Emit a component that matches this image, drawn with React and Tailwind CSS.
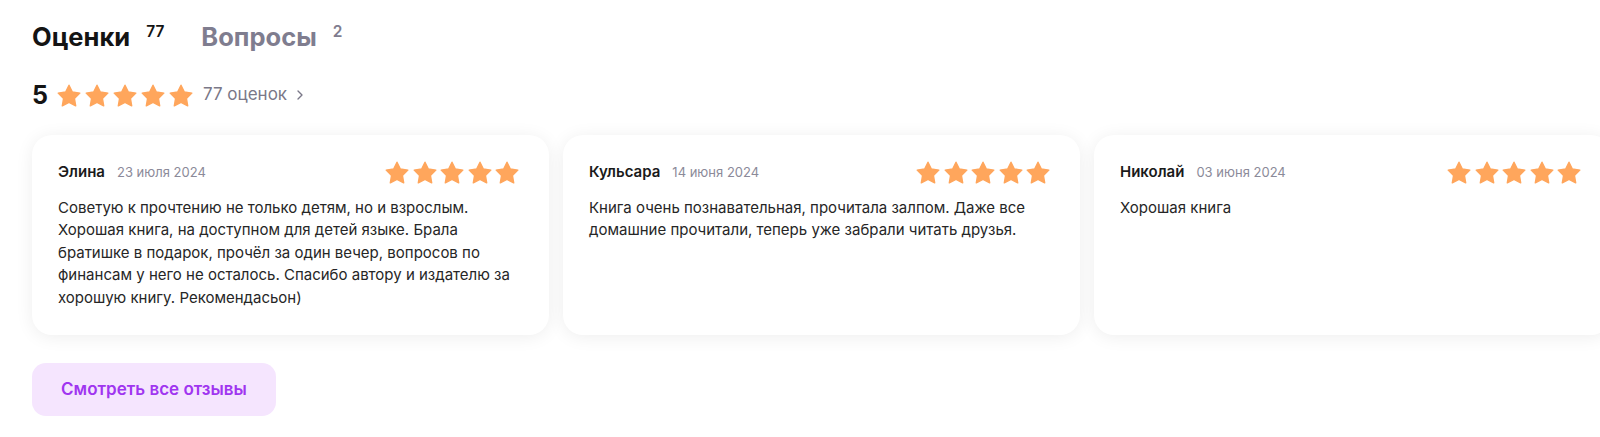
import { ChevronRight } from 'lucide-react';

const REVIEWS = [
  {
    name: 'Элина',
    date: '23 июля 2024',
    text: 'Советую к прочтению не только детям, но и взрослым. Хорошая книга, на доступном для детей языке. Брала братишке в подарок, прочёл за один вечер, вопросов по финансам у него не осталось. Спасибо автору и издателю за хорошую книгу. Рекомендасьон)',
  },
  {
    name: 'Кульсара',
    date: '14 июня 2024',
    text: 'Книга очень познавательная, прочитала залпом. Даже все домашние прочитали, теперь уже забрали читать друзья.',
  },
  {
    name: 'Николай',
    date: '03 июня 2024',
    text: 'Хорошая книга',
  },
];

function Star({ className }) {
  return (
    <svg viewBox="1.5 1.5 21 20" className={className} fill="#ffa65c" stroke="#ffa65c" strokeWidth="1.2" strokeLinejoin="round">
      <path d="M12 2.5l2.94 5.96 6.56.95-4.75 4.63 1.12 6.54L12 17.5l-5.87 3.08 1.12-6.54L2.5 9.41l6.56-.95L12 2.5z" />
    </svg>
  );
}

function Stars({ size, gap }) {
  return (
    <div className={`flex items-center ${gap}`}>
      {[0, 1, 2, 3, 4].map(i => <Star key={i} className={size} />)}
    </div>
  );
}

function ReviewCard({ r }) {
  return (
    <div className="flex-none w-[517px] h-[200px] bg-white rounded-[20px] shadow-[0_2px_18px_rgba(0,0,0,0.07)] pl-[26px] pr-[30px] pt-[26px]">
      <div className="flex items-center justify-between h-[23px]">
        <div className="flex items-baseline gap-[12px]">
          <span className="text-[15px] font-semibold text-[#1a1a1a]">{r.name}</span>
          <span className="text-[13px] text-[#8b8a99]">{r.date}</span>
        </div>
        <Stars size="w-[24px] h-[23px]" gap="gap-[3.5px]" />
      </div>
      <p className="mt-[13px] max-w-[452px] text-[15px] leading-[22.4px] text-[#262626]">{r.text}</p>
    </div>
  );
}

export default function App() {
  return (
    <div className="w-full overflow-hidden bg-white pl-[32px] pt-[21px] pb-[22px] font-['Inter','Noto_Sans',sans-serif]">
      {/* ── Onglets ─────────────────────────────────── */}
      <div className="flex items-start h-[32px]">
        <span className="text-[25.5px] leading-[32px] font-bold text-[#141414]">Оценки</span>
        <span className="ml-[16px] mt-[3px] text-[15.5px] leading-[16px] font-semibold text-[#141414]">77</span>
        <span className="ml-[37px] text-[25.5px] leading-[32px] font-bold text-[#7f7d8f]">Вопросы</span>
        <span className="ml-[16px] mt-[3px] text-[15.5px] leading-[16px] font-semibold text-[#7f7d8f]">2</span>
      </div>

      {/* ── Note globale ────────────────────────────── */}
      <div className="mt-[28px] flex items-center h-[28px]">
        <span className="text-[25px] leading-[28px] font-bold text-[#141414] mr-[9px]">5</span>
        <Stars size="w-[24px] h-[23px]" gap="gap-[4px]" />
        <span className="ml-[10px] text-[17px] text-[#7a7888]">77 оценок</span>
        <ChevronRight className="ml-[5px] w-[16px] h-[16px] text-[#7a7888]" strokeWidth={2} />
      </div>

      {/* ── Cartes ──────────────────────────────────── */}
      <div className="mt-[26px] flex gap-[14px]">
        {REVIEWS.map((r, i) => <ReviewCard key={i} r={r} />)}
      </div>

      <button className="mt-[28px] w-[244px] h-[53px] rounded-[14px] bg-[#f5e5fe] text-[17px] font-semibold text-[#a035f0]">
        Смотреть все отзывы
      </button>
    </div>
  );
}
